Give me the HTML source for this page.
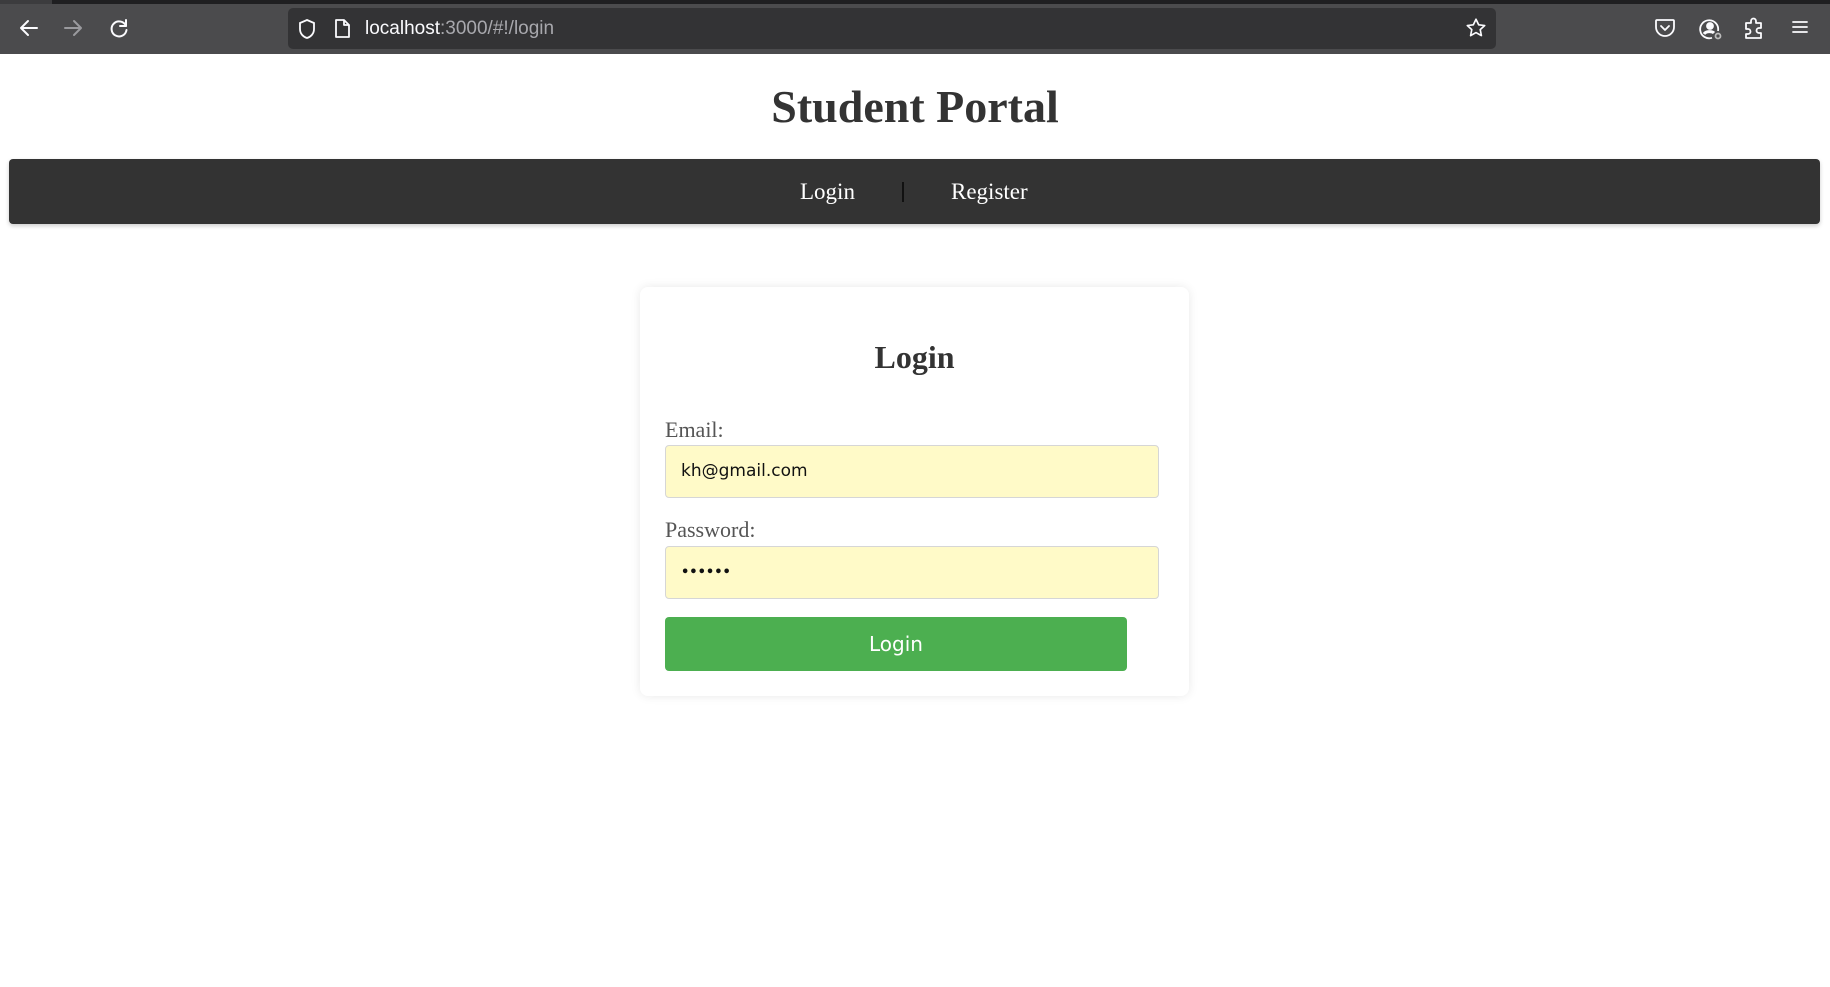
<!DOCTYPE html>
<html><head><meta charset="utf-8"><style>
*{box-sizing:border-box;margin:0;padding:0}
body{width:1830px;height:987px;background:#fff;position:relative;overflow:hidden;font-family:"Liberation Serif",serif}
.chrome{position:absolute;left:0;top:0;width:1830px;height:54px;background:#4b4b4d}
.strip{position:absolute;left:0;top:0;width:1830px;height:4px;background:#1f1f21}
.strip i{position:absolute;left:0;top:0;width:52px;height:4px;background:#3c3c3e}
.url{position:absolute;left:288px;top:8px;width:1208px;height:41px;background:#333335;border-radius:5px}
.urltext{position:absolute;left:365px;top:18px;font:19px "Liberation Sans",sans-serif;color:#fbfbfe}
.urltext span{color:#a8a8ad}
svg.ic{position:absolute}
h1{position:absolute;left:0;width:1830px;top:80px;text-align:center;font:bold 46px "Liberation Serif",serif;color:#333}
.nav{position:absolute;left:9px;top:159px;width:1811px;height:65px;background:#333;border-radius:4px;box-shadow:0 2px 4px rgba(0,0,0,.2)}
.nav a{position:absolute;top:20px;font:23px "Liberation Serif",serif;color:#fff}
.sep{position:absolute;left:893px;top:23px;width:2px;height:20px;background:#111}
.card{position:absolute;left:640px;top:287px;width:549px;height:409px;background:#fff;border-radius:8px;box-shadow:0 0 10px rgba(0,0,0,.09)}
h2{position:absolute;left:0;width:549px;top:52px;text-align:center;font:bold 32px "Liberation Serif",serif;color:#333}
label{position:absolute;left:25px;font:22px "Liberation Serif",serif;color:#555}
.inp{position:absolute;left:25px;width:494px;height:53px;background:#fffac8;border:1px solid #d6d6d6;border-radius:4px;font:17px "DejaVu Sans",sans-serif;color:#111;padding-left:15px;line-height:51px}
.btn{position:absolute;left:25px;top:330px;width:462px;height:54px;background:#4caf50;border-radius:4px;color:#fff;text-align:center;font:20px "DejaVu Sans",sans-serif;line-height:54px}
</style></head><body>
<div class="chrome"><div class="strip"><i></i></div></div>
<svg class="ic" style="left:18px;top:17px" width="22" height="22" viewBox="0 0 22 22" fill="none" stroke="#fbfbfe" stroke-width="2" stroke-linecap="round" stroke-linejoin="round"><path d="M19 11H3M10 4l-7 7 7 7"/></svg>
<svg class="ic" style="left:62px;top:17px" width="22" height="22" viewBox="0 0 22 22" fill="none" stroke="#9a9a9e" stroke-width="2" stroke-linecap="round" stroke-linejoin="round"><path d="M3 11h16M12 4l7 7-7 7"/></svg>
<svg class="ic" style="left:108px;top:17px" width="22" height="22" viewBox="0 0 22 22" fill="none" stroke="#fbfbfe" stroke-width="2" stroke-linecap="round"><path d="M18 9a7.5 7.5 0 1 0 .5 4"/><path d="M18 3v6h-6" stroke-linejoin="round"/></svg>
<div class="url"></div>
<svg class="ic" style="left:297px;top:18px" width="20" height="22" viewBox="0 0 20 22" fill="none" stroke="#fbfbfe" stroke-width="1.8"><path d="M10 2l7 3v6c0 5-3.5 8-7 9-3.5-1-7-4-7-9V5z"/></svg>
<svg class="ic" style="left:334px;top:18px" width="17" height="21" viewBox="0 0 17 21" fill="none" stroke="#fbfbfe" stroke-width="1.8" stroke-linejoin="round"><path d="M2 2h8l5 5v12H2z"/><path d="M10 2v5h5"/></svg>
<div class="urltext">localhost<span>:3000/#!/login</span></div>
<svg class="ic" style="left:1465px;top:17px" width="22" height="22" viewBox="0 0 24 24" fill="none" stroke="#fbfbfe" stroke-width="1.8" stroke-linejoin="round"><path d="M12 2.5l2.9 6 6.6.8-4.9 4.5 1.3 6.5L12 17l-5.9 3.3 1.3-6.5-4.9-4.5 6.6-.8z"/></svg>
<svg class="ic" style="left:1654px;top:18px" width="22" height="20" viewBox="0 0 22 20" fill="none" stroke="#fbfbfe" stroke-width="1.8" stroke-linejoin="round" stroke-linecap="round"><path d="M3 2h16a1 1 0 0 1 1 1v6a9 9 0 0 1-18 0V3a1 1 0 0 1 1-1z"/><path d="M7 8l4 4 4-4"/></svg>
<svg class="ic" style="left:1699px;top:17px" width="24" height="24" viewBox="0 0 24 24" fill="none" stroke="#fbfbfe" stroke-width="1.8"><path d="M19 14A9 9 0 1 0 13 20.8"/><circle cx="11" cy="9" r="3" fill="#fbfbfe"/><path d="M5 17c2-3 8-3 10-1" stroke-width="3"/><circle cx="19" cy="19" r="2.5" stroke="#bbb"/></svg>
<svg class="ic" style="left:1743px;top:16px" width="22" height="24" viewBox="0 0 22 24" fill="none" stroke="#fbfbfe" stroke-width="1.8" stroke-linejoin="round"><path d="M3 7h5V5a2.5 2.5 0 0 1 5 0v2h5v5h-2a2.5 2.5 0 0 0 0 5h2v5H3v-4h2a2.5 2.5 0 0 0 0-5H3z"/></svg>
<svg class="ic" style="left:1791px;top:19px" width="18" height="16" viewBox="0 0 18 16" fill="none" stroke="#fbfbfe" stroke-width="1.8" stroke-linecap="round"><path d="M2 3h14M2 8h14M2 13h14"/></svg>

<h1>Student Portal</h1>
<div class="nav"><a style="left:791px">Login</a><div class="sep"></div><a style="left:942px">Register</a></div>

<div class="card">
<h2>Login</h2>
<label style="top:130px">Email:</label>
<div class="inp" style="top:158px">kh@gmail.com</div>
<label style="top:230px">Password:</label>
<div class="inp" style="top:259px;font-size:13px;font-weight:bold">&#8226;&#8226;&#8226;&#8226;&#8226;&#8226;</div>
<div class="btn">Login</div>
</div>
</body></html>
